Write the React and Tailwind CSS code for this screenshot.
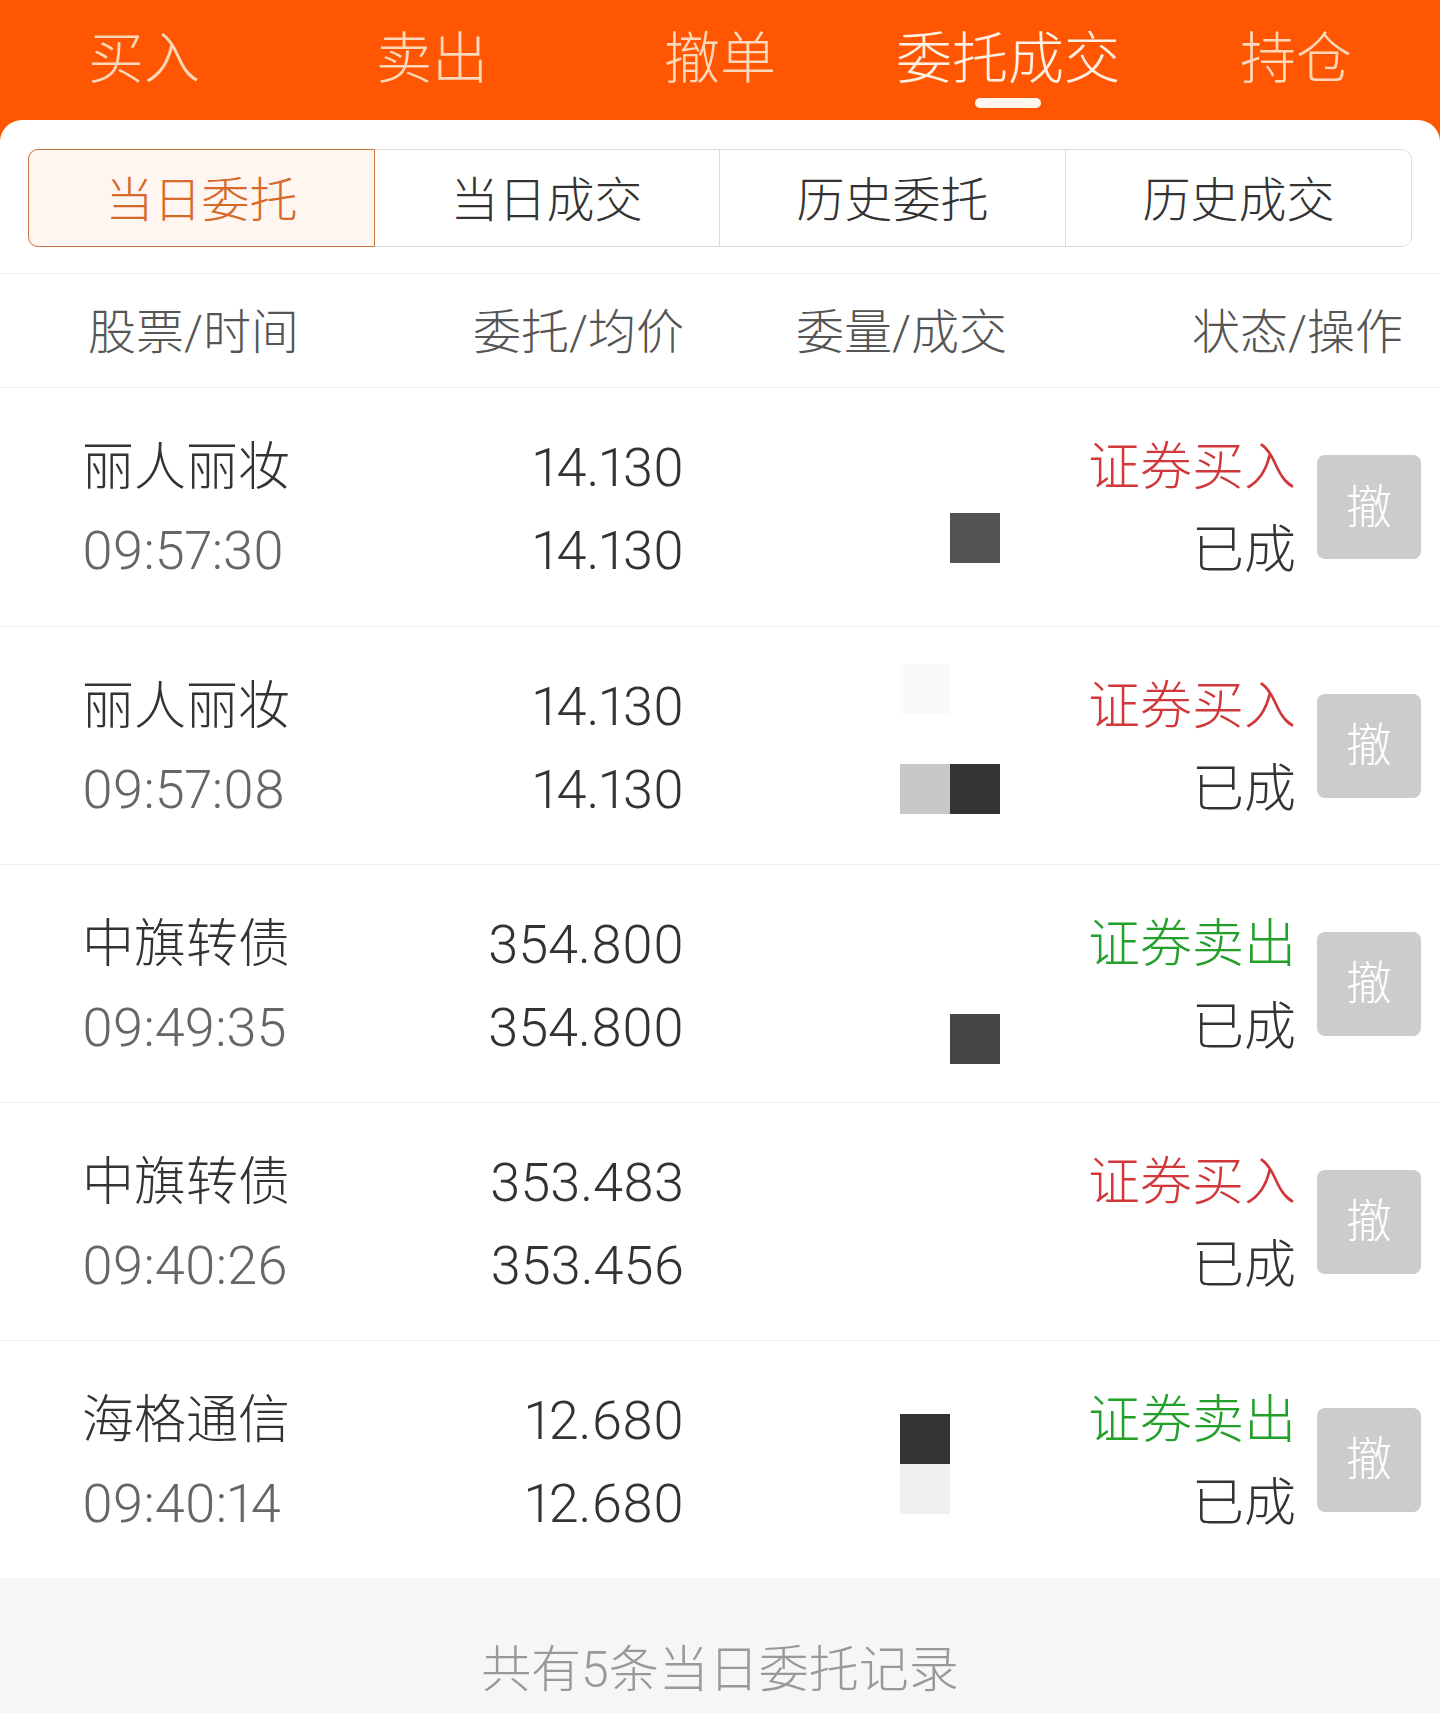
const FONT = { fontFamily: '"Roboto", "Noto Sans CJK SC", sans-serif' };

const navs = ["买入", "卖出", "撤单", "委托成交", "持仓"];
const subTabs = ["当日委托", "当日成交", "历史委托", "历史成交"];

const orders = [
  {
    name: "丽人丽妆",
    time: "09:57:30",
    price: "14.130",
    avg: "14.130",
    type: "证券买入",
    buy: true,
    blocks: [{ x: 950, y: 125, c: "bg-[#525252]" }],
  },
  {
    name: "丽人丽妆",
    time: "09:57:08",
    price: "14.130",
    avg: "14.130",
    type: "证券买入",
    buy: true,
    blocks: [
      { x: 900, y: 37, c: "bg-[#fafafa]" },
      { x: 900, y: 137, c: "bg-[#c8c8c8]" },
      { x: 950, y: 137, c: "bg-[#333333]" },
    ],
  },
  {
    name: "中旗转债",
    time: "09:49:35",
    price: "354.800",
    avg: "354.800",
    type: "证券卖出",
    buy: false,
    blocks: [{ x: 950, y: 149, c: "bg-[#454545]" }],
  },
  {
    name: "中旗转债",
    time: "09:40:26",
    price: "353.483",
    avg: "353.456",
    type: "证券买入",
    buy: true,
    blocks: [],
  },
  {
    name: "海格通信",
    time: "09:40:14",
    price: "12.680",
    avg: "12.680",
    type: "证券卖出",
    buy: false,
    blocks: [
      { x: 900, y: 73, c: "bg-[#333333]" },
      { x: 900, y: 123, c: "bg-[#f0f0f0]" },
    ],
  },
];

function OrderRow({ o, first }) {
  return (
    <div
      className={
        "relative flex h-[238px] items-center " +
        (first ? "" : "border-t border-[#eeeeee]")
      }
    >
      <div className="w-[400px] pl-[82px] pt-[4px] text-[52px] leading-[83px]">
        <div className="text-[#333333]">{o.name}</div>
        <div className="text-[54px] proportional-nums text-[#666666]">{o.time}</div>
      </div>
      <div className="w-[284px] pt-[4px] text-right text-[54px] leading-[83px] proportional-nums text-[#333333]">
        <div>{o.price}</div>
        <div>{o.avg}</div>
      </div>
      <div className="flex-1" />
      <div className="pt-[4px] text-right text-[52px] leading-[83px]">
        <div className={o.buy ? "text-[#d0383a]" : "text-[#22a02a]"}>{o.type}</div>
        <div className="text-[#333333]">已成</div>
      </div>
      <button className="ml-[21px] mr-[19px] flex h-[104px] w-[104px] items-center justify-center rounded-[8px] bg-[#cccccc] text-[46px] text-white">
        撤
      </button>
      {o.blocks.map((b, i) => (
        <div
          key={i}
          className={"absolute h-[50px] w-[50px] " + b.c}
          style={{ left: b.x, top: b.y }}
        />
      ))}
    </div>
  );
}

export default function App() {
  return (
    <div className="min-h-[1713px] bg-[#fe5602] font-light" style={FONT}>
      {/* 顶部导航 */}
      <div className="flex h-[120px]">
        {navs.map((n, i) => (
          <div key={n} className="relative flex flex-1 justify-center">
            <span
              className={
                "mt-[26px] text-[56px] leading-[66px] " +
                (i === 3 ? "text-[#fff2e4]" : "text-[#fbd8ba]")
              }
            >
              {n}
            </span>
            {i === 3 && (
              <div className="absolute left-1/2 top-[98px] h-[10px] w-[66px] -translate-x-1/2 rounded-full bg-[#fff6ee]" />
            )}
          </div>
        ))}
      </div>

      <div className="rounded-t-[22px] bg-white">
        {/* 子标签 */}
        <div className="px-[28px] pt-[29px]">
          <div className="flex h-[98px] rounded-[10px] border border-[#dddddd]">
            {subTabs.map((t, i) => (
              <div
                key={t}
                className={
                  "flex flex-1 items-center justify-center pt-[5px] text-[48px] " +
                  (i === 0
                    ? "-m-px rounded-l-[10px] border border-[#c9773f] bg-[#fff6f1] text-[#d66a2a]"
                    : "border-l border-[#dddddd] text-[#333333]") +
                  (i === 1 ? " border-l-0" : "")
                }
              >
                {t}
              </div>
            ))}
          </div>
        </div>

        {/* 表头 */}
        <div className="mt-[26px] flex h-[115px] items-center border-y border-[#eeeeee] pt-[4px] text-[48px] text-[#555555]">
          <div className="w-[400px] pl-[88px]">股票/时间</div>
          <div className="w-[284px] text-right">委托/均价</div>
          <div className="w-[323px] text-right">委量/成交</div>
          <div className="flex-1 pr-[37px] text-right">状态/操作</div>
        </div>

        {orders.map((o, i) => (
          <OrderRow key={i} o={o} first={i === 0} />
        ))}

        {/* 底部统计 */}
        <div className="h-[140px] bg-[#f5f6f8] pt-[67px] text-center text-[50px] leading-[50px] text-[#999999]">
          共有5条当日委托记录
        </div>
      </div>
    </div>
  );
}
